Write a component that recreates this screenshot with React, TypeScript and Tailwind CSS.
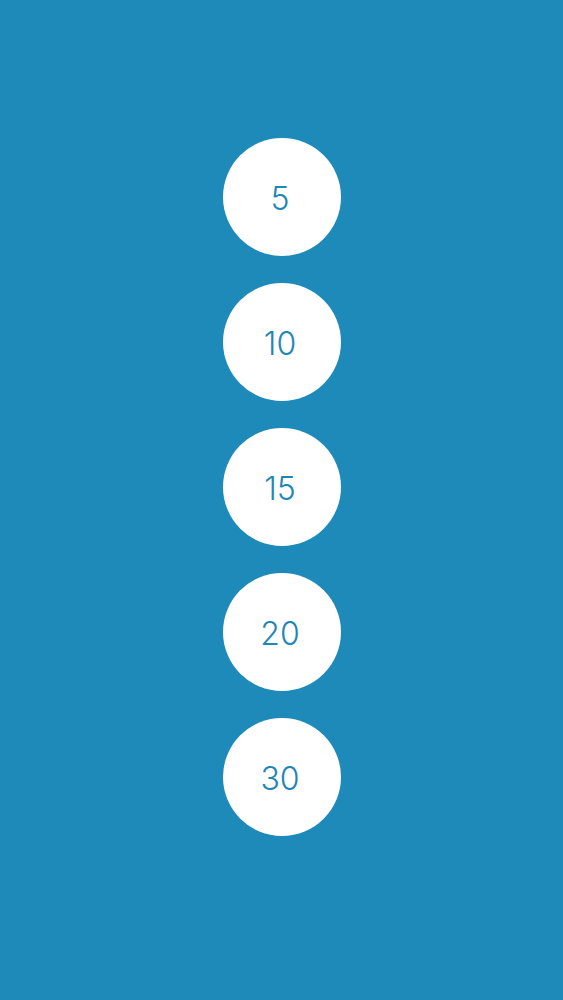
import React from "react";

const intervals = [5, 10, 15, 20, 30];

function IntervalButton({ value }: { value: number }) {
	return (
		<button className="flex h-[118px] w-[118px] items-center justify-center rounded-full bg-white pt-[4px] pr-[3px] text-[32px] font-light text-[#1f86b6] font-['Inter',sans-serif]">
			{value}
		</button>
	);
}

export default function App() {
	return (
		<div className="flex min-h-screen w-full flex-col items-center gap-[27px] bg-[#1e8aba] pt-[138px]">
			{intervals.map((value) => (
				<IntervalButton key={value} value={value} />
			))}
		</div>
	);
}
